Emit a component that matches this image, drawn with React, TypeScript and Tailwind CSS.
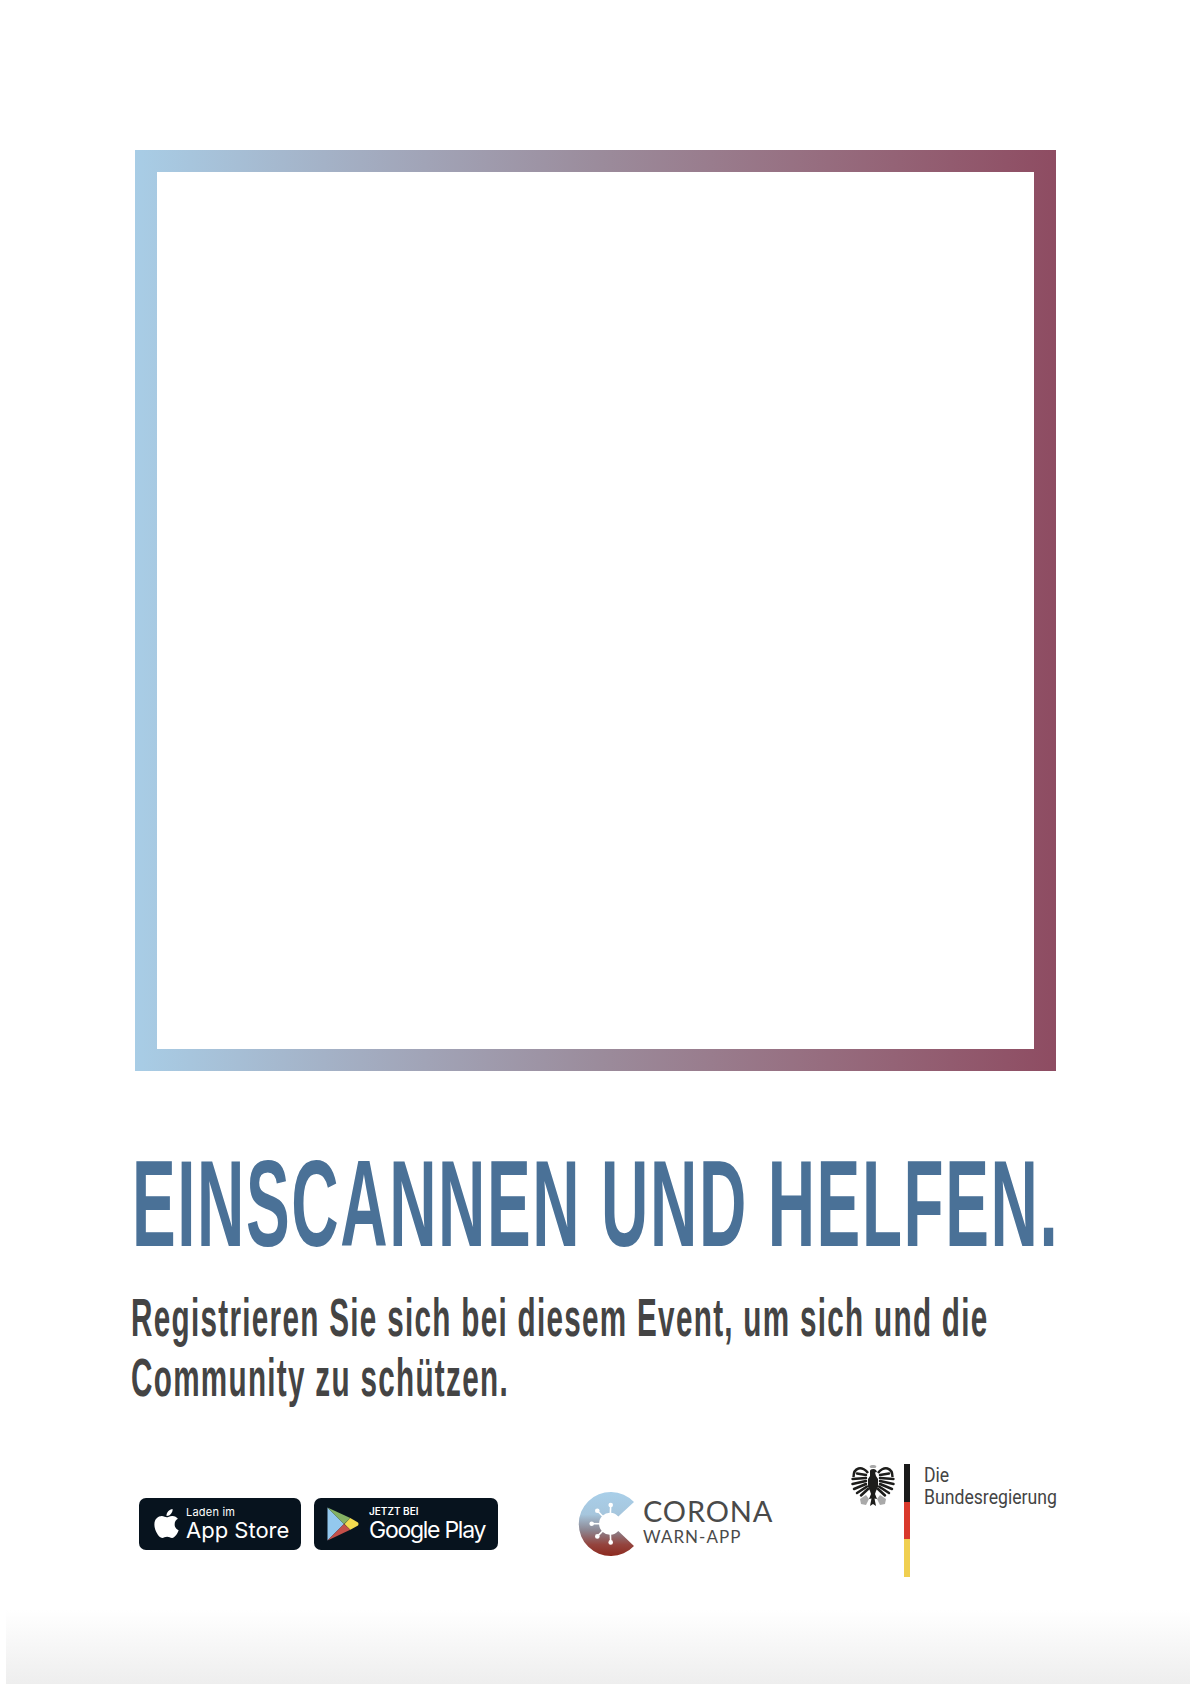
import React from "react";
import { FaApple } from "react-icons/fa";

const Wing = () => (
  <g>
    <path d="M17 9 C15 6 11 3.500 7.500 4.500 C4 5.500 2.500 9 2.500 13" fill="none" stroke="#1d1d1b" strokeWidth="2.4" />
    <g stroke="#1d1d1b" strokeWidth="2.5" strokeLinecap="round">
      <line x1="15" y1="11" x2="6" y2="9.500" />
      <line x1="15" y1="14" x2="1.500" y2="15" />
      <line x1="15" y1="17" x2="1.500" y2="20" />
      <line x1="15" y1="20" x2="3" y2="25" />
      <line x1="16" y1="22.500" x2="6" y2="29" />
      <line x1="17" y1="25" x2="10" y2="31.500" />
    </g>
    <path d="M9 35 L15 31 L18 35 L15 41 L10 40 Z" fill="#a9a9a9" />
  </g>
);

const Eagle = () => (
  <svg width="44" height="43" viewBox="0 0 44 43" className="shrink-0">
    <path d="M18.500 2 C20 0.500 24 0.500 25.500 2 L24.500 4 L19.500 4 Z" fill="#a9a9a9" />
    <Wing />
    <g transform="matrix(-1 0 0 1 44 0)">
      <Wing />
    </g>
    <path
      d="M19 7 C19 5 23 4 25 6 L26 8 L24 8.500 L25 12 L27 15 L27 23 L25 27 L24 30 L26 35 L23.500 34.500 L25 42 L22 40 L19 42 L20.500 34.500 L18 35 L20 30 L19 27 L17 23 L17 15 L19 12 Z"
      fill="#1d1d1b"
    />
  </svg>
);

const CoronaC = () => (
  <svg width="60" height="68" viewBox="0 0 60 68" className="shrink-0">
    <defs>
      <linearGradient id="cwa" x1="0" y1="0" x2="0" y2="1">
        <stop offset="0" stopColor="#a9cfe9" />
        <stop offset="0.35" stopColor="#a6c6dd" />
        <stop offset="0.6" stopColor="#8c8590" />
        <stop offset="0.82" stopColor="#94443e" />
        <stop offset="1" stopColor="#8d2a1f" />
      </linearGradient>
    </defs>
    <path d="M56 11 A32 32 0 1 0 56 55 L40.300 40 A11 11 0 1 1 40.300 25.400 Z" fill="url(#cwa)" />
    <g stroke="#fff" strokeWidth="1.6">
      <line x1="32" y1="32.700" x2="32.700" y2="14" />
      <line x1="32" y1="32.700" x2="19.300" y2="19.700" />
      <line x1="32" y1="32.700" x2="13.700" y2="32.700" />
      <line x1="32" y1="32.700" x2="19.300" y2="45.400" />
      <line x1="32" y1="32.700" x2="32.700" y2="51.400" />
    </g>
    <g fill="#fff">
      <circle cx="32.700" cy="14" r="2.300" />
      <circle cx="19.300" cy="19.700" r="2.300" />
      <circle cx="13.700" cy="32.700" r="2.300" />
      <circle cx="19.300" cy="45.400" r="2.300" />
      <circle cx="32.700" cy="51.400" r="2.300" />
    </g>
  </svg>
);

const PlayIcon = () => (
  <svg width="32" height="34" viewBox="0 0 32 34" className="shrink-0">
    <path d="M0.500 0.500 L0.500 33.500 L17 17 Z" fill="#93c8ee" />
    <path d="M0.500 0.500 L17 17 L23.300 11 Z" fill="#85b264" />
    <path d="M0.500 33.500 L17 17 L23.300 22.800 Z" fill="#c4504a" />
    <path d="M23.300 11 L31 15.500 Q32 17 31 18.500 L23.300 22.800 L17.500 17 Z" fill="#f4db4f" />
  </svg>
);

export default function App() {
  return (
    <div className="w-[1190px] h-[1684px] bg-white flex flex-col overflow-hidden font-['Liberation_Sans',sans-serif]">
      <div className="ml-[135px] mt-[150px] w-[921px] h-[921px] shrink-0 p-[22px] bg-gradient-to-r from-[#a8cde6] via-[#9b8c9c] to-[#8e4c62]">
        <div className="w-full h-full bg-white" />
      </div>

      <h1 className="ml-[132px] mt-[73px] h-[120px] leading-[120px] text-[122px] font-bold tracking-[3px] text-[#4a7197] whitespace-nowrap origin-left scale-x-[0.537]">
        EINSCANNEN UND HELFEN.
      </h1>

      <p className="ml-[131px] mt-[24px] text-[53px] leading-[60px] font-bold tracking-[2.3px] text-[#444444] whitespace-nowrap origin-left scale-x-[0.56]">
        Registrieren Sie sich bei diesem Event, um sich und die
        <br />
        Community zu schützen.
      </p>

      <div className="flex items-start ml-[139px] mt-[58px] h-[116px]">
        <div className="mt-[32px] w-[162px] h-[52px] rounded-[7px] bg-[#07131e] flex items-center pl-[13px] text-white font-['Inter',sans-serif]">
          <FaApple className="w-[29px] h-[33px] -mt-[2px] shrink-0" />
          <div className="ml-[5px] flex flex-col">
            <span className="text-[11px] leading-[12px] tracking-[0.02em]">Laden im</span>
            <span className="text-[22px] leading-[24px] whitespace-nowrap">App Store</span>
          </div>
        </div>

        <div className="ml-[13px] mt-[32px] w-[184px] h-[52px] rounded-[7px] bg-[#07131e] flex items-center pl-[13px] text-white font-['Inter',sans-serif]">
          <PlayIcon />
          <div className="ml-[10px] flex flex-col">
            <span className="text-[10px] leading-[12px] font-semibold">JETZT BEI</span>
            <span className="text-[23px] leading-[26px] tracking-[-0.055em] whitespace-nowrap">Google Play</span>
          </div>
        </div>

        <div className="ml-[80px] mt-[25px] flex items-start">
          <CoronaC />
          <div className="ml-[5px] mt-[4px] flex flex-col text-[#4a4a4a] font-['Lato',sans-serif]">
            <span className="text-[29px] leading-[32px] tracking-[0.03em]">CORONA</span>
            <span className="text-[17px] leading-[20px] tracking-[0.06em] whitespace-nowrap">WARN-APP</span>
          </div>
        </div>

        <div className="ml-[78px] -mt-[2px] flex items-start">
          <Eagle />
          <div className="ml-[9px] w-[6px] h-[113px] shrink-0 flex flex-col">
            <div className="flex-1 bg-[#1a1a1a]" />
            <div className="flex-1 bg-[#d9392b]" />
            <div className="flex-1 bg-[#f0cf50]" />
          </div>
          <div className="ml-[14px] text-[21px] leading-[22px] text-[#444444] font-['Roboto',sans-serif] whitespace-nowrap origin-left scale-x-[0.84]">
            Die
            <br />
            Bundesregierung
          </div>
        </div>
      </div>

      <div className="ml-[6px] mt-auto h-[74px] bg-gradient-to-b from-white to-[#eeeeee]" />
    </div>
  );
}
